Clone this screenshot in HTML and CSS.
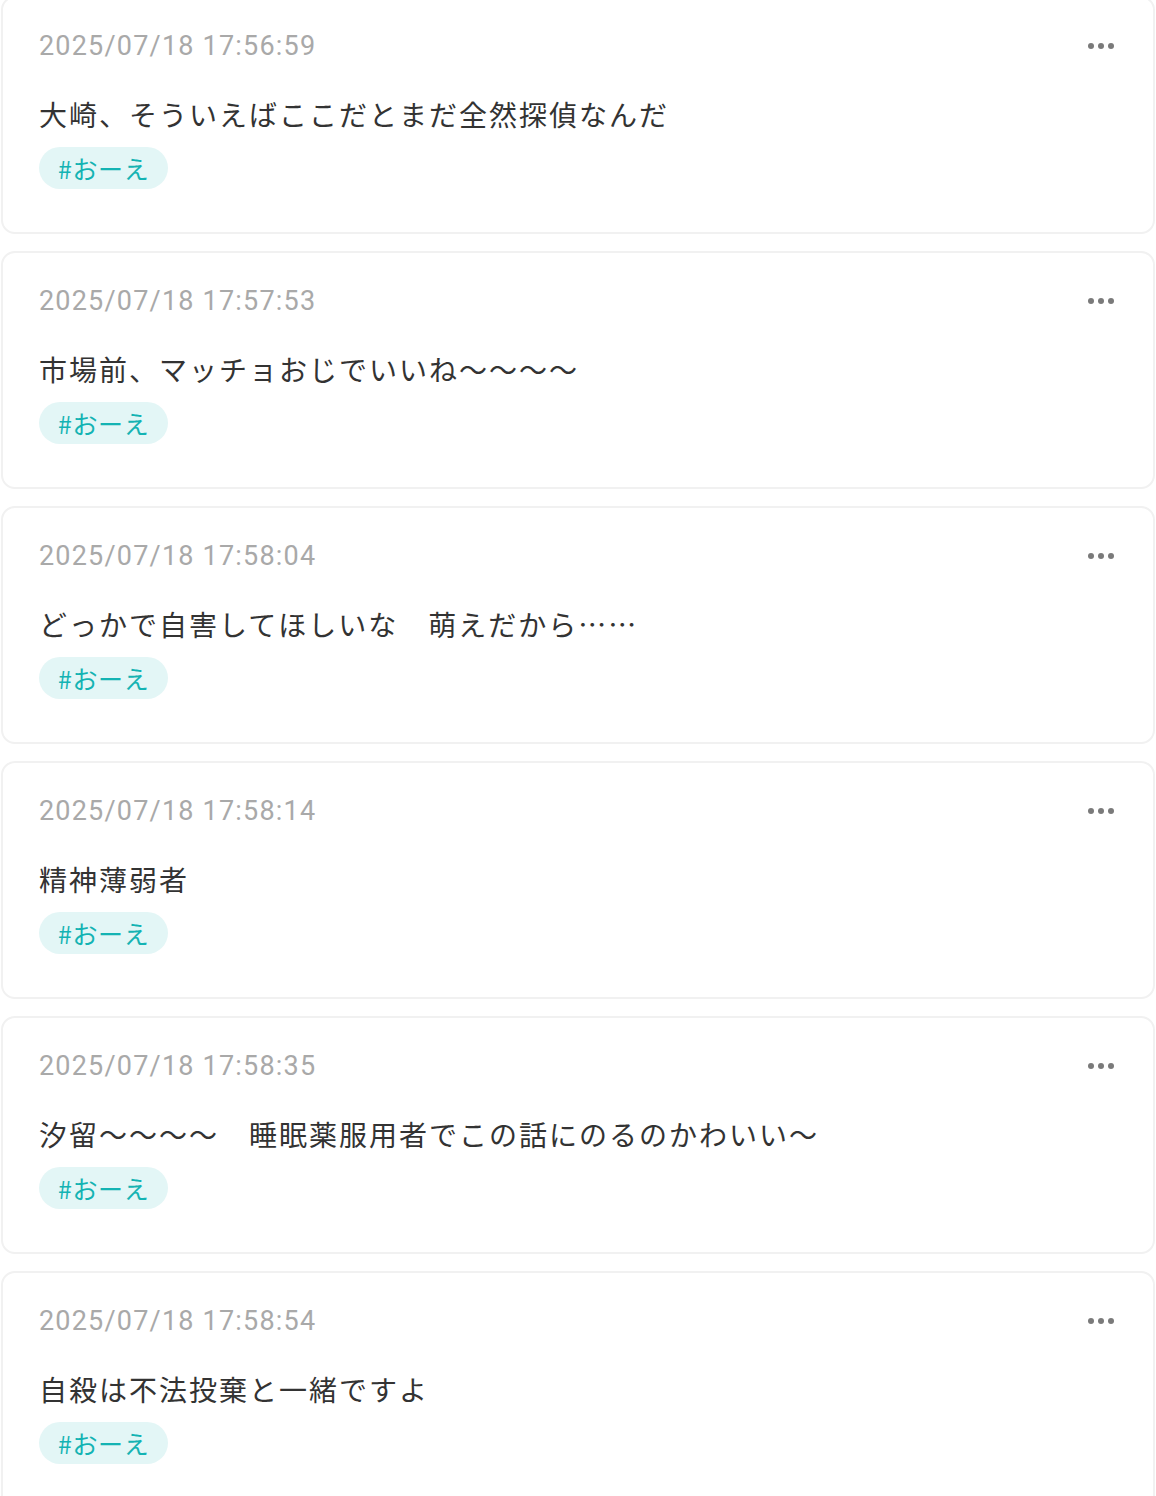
FILE: index.html
```html
<!DOCTYPE html>
<html lang="ja">
<head>
<meta charset="utf-8">
<link rel="stylesheet" href="styles.css">
</head>
<body>
<div class="list">
  <div class="card">
    <div class="head"><span class="time">2025/07/18 17:56:59</span><span class="more"><i></i><i></i><i></i></span></div>
    <p class="text">大崎、そういえばここだとまだ全然探偵なんだ</p>
    <span class="tag">#おーえ</span>
  </div>
  <div class="card">
    <div class="head"><span class="time">2025/07/18 17:57:53</span><span class="more"><i></i><i></i><i></i></span></div>
    <p class="text">市場前、マッチョおじでいいね〜〜〜〜</p>
    <span class="tag">#おーえ</span>
  </div>
  <div class="card">
    <div class="head"><span class="time">2025/07/18 17:58:04</span><span class="more"><i></i><i></i><i></i></span></div>
    <p class="text">どっかで自害してほしいな　萌えだから……</p>
    <span class="tag">#おーえ</span>
  </div>
  <div class="card">
    <div class="head"><span class="time">2025/07/18 17:58:14</span><span class="more"><i></i><i></i><i></i></span></div>
    <p class="text">精神薄弱者</p>
    <span class="tag">#おーえ</span>
  </div>
  <div class="card">
    <div class="head"><span class="time">2025/07/18 17:58:35</span><span class="more"><i></i><i></i><i></i></span></div>
    <p class="text">汐留〜〜〜〜　睡眠薬服用者でこの話にのるのかわいい〜</p>
    <span class="tag">#おーえ</span>
  </div>
  <div class="card">
    <div class="head"><span class="time">2025/07/18 17:58:54</span><span class="more"><i></i><i></i><i></i></span></div>
    <p class="text">自殺は不法投棄と一緒ですよ</p>
    <span class="tag">#おーえ</span>
  </div>
</div>
</body>
</html>
```

FILE: styles.css
```css
html, body {
  margin: 0;
  padding: 0;
  background: #ffffff;
}
body {
  font-family: "Noto Sans CJK JP", "Noto Sans", sans-serif;
  color: #333333;
}
.list {
  display: flex;
  flex-direction: column;
  gap: 17px;
  margin-top: -4px;
  padding: 0 1px;
}
.card {
  border: 2px solid #f1f1f1;
  border-radius: 14px;
  background: #ffffff;
  padding: 28px 38px 43px 36px;
  height: 238px;
  box-sizing: border-box;
  display: flex;
  flex-direction: column;
  align-items: flex-start;
}
.head {
  display: flex;
  justify-content: space-between;
  align-items: center;
  align-self: stretch;
  height: 40px;
}
.time {
  font-family: Roboto, "Noto Sans", sans-serif;
  font-size: 27px;
  letter-spacing: 1.2px;
  color: #a9a9a9;
  line-height: 40px;
}
.more {
  display: flex;
  gap: 4px;
  align-items: center;
  margin-right: 1px;
}
.more i {
  display: block;
  width: 6px;
  height: 6px;
  border-radius: 50%;
  background: #7a7a7a;
}
.text {
  margin: 28px 0 0;
  font-size: 28px;
  line-height: 40px;
  letter-spacing: 2px;
  color: #333333;
}
.tag {
  margin-top: 13px;
  height: 42px;
  line-height: 42px;
  padding: 0 19px;
  border-radius: 21px;
  background: #e3f6f6;
  color: #14b3b3;
  font-size: 25px;
  letter-spacing: 0.6px;
}
```
